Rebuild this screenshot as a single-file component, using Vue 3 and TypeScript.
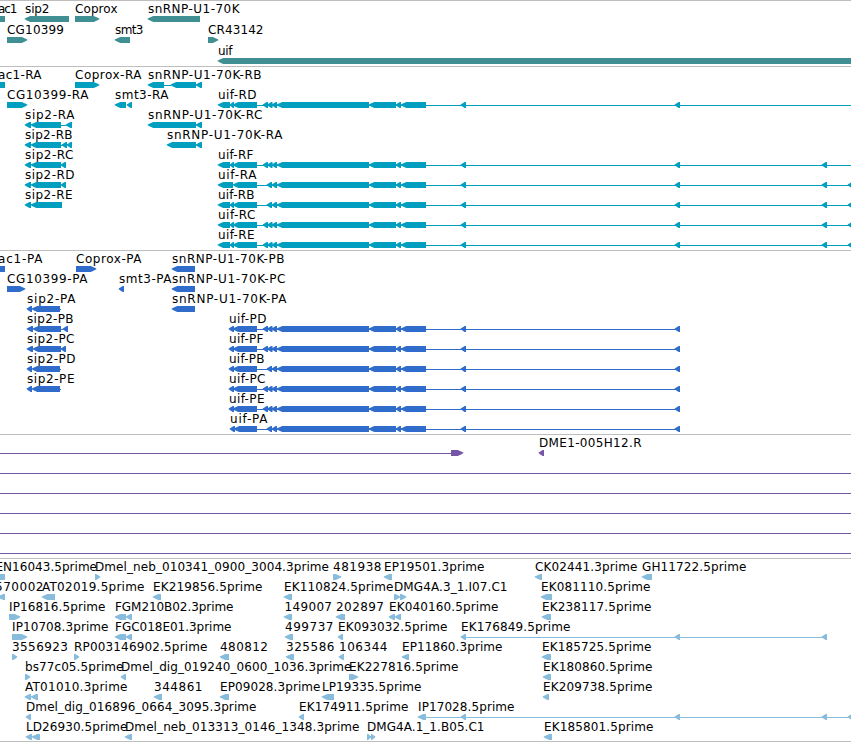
<script setup lang="ts">
type Span = [number, number]
type Direction = 'left' | 'right' | 'none'

interface Feature {
  row: number
  label?: string
  text?: Span
  dir: Direction
  spans: Span[]
  line?: Span
}

interface Track {
  name: string
  color: string
  height: number
  pitch: number
  features: Feature[]
}

const WIDTH = 851
const BAR_TOP = 16
const BASELINE = 13

function f(row: number, label: string, start: number, end: number, dir: Direction, spans: Span[], line?: Span): Feature {
  return { row, label, text: [start, end], dir, spans, line }
}

const uifCore: Span[] = [[277, 369], [369, 396], [396, 401], [401, 426], [461, 466], [675, 680]]
const triple: Span[] = [[263, 268], [267.5, 272.5], [272, 277]]
const pair: Span[] = [[267, 272], [272, 277]]
const rnaStart: Span[] = [[218, 230], [230, 234], [233, 257]]
const proteinStart: Span[] = [[229, 234], [233, 257]]
const sipStart: Span[] = [[25, 31], [31, 61]]
const sipProtein: Span[] = [[27, 32], [32, 60]]

const tracks: Track[] = [
  {
    name: 'genes', color: '#408f93', height: 66, pitch: 21,
    features: [
      f(0, 'ac1', -2, 17, 'none', [[0, 5]]),
      f(0, 'sip2', 25, 49, 'left', [[25, 69]]),
      f(0, 'Coprox', 75, 117, 'right', [[75, 99]]),
      f(0, 'snRNP-U1-70K', 148, 239, 'left', [[148, 200]]),
      f(1, 'CG10399', 7, 63.5, 'right', [[7, 27]]),
      f(1, 'smt3', 115, 143, 'left', [[115, 130]]),
      f(1, 'CR43142', 208, 263, 'right', [[208, 218]]),
      f(2, 'uif', 218, 232, 'left', [[218, 856]]),
    ],
  },
  {
    name: 'transcripts', color: '#009fc0', height: 184, pitch: 20,
    features: [
      f(0, 'ac1-RA', -2, 41, 'none', [[0, 5]]),
      f(0, 'Coprox-RA', 75, 141, 'right', [[75, 99]]),
      f(0, 'snRNP-U1-70K-RB', 148, 261, 'left', [[148, 164], [171, 196], [196, 202]], [164, 171]),
      f(1, 'CG10399-RA', 7, 88, 'right', [[7, 27]]),
      f(1, 'smt3-RA', 115, 168, 'left', [[115, 126], [127, 132]]),
      f(1, 'uif-RD', 218, 256, 'left', [...rnaStart, ...triple, ...uifCore], [257, 851]),
      f(2, 'sip2-RA', 25, 74, 'left', [...sipStart, [66, 72]], [61, 66]),
      f(2, 'snRNP-U1-70K-RC', 148, 262, 'left', [[148, 196], [196, 202]]),
      f(3, 'sip2-RB', 25, 72, 'left', [...sipStart, [62, 67], [67, 72]], [61, 67]),
      f(3, 'snRNP-U1-70K-RA', 167, 282, 'left', [[167, 196], [196, 202]]),
      f(4, 'sip2-RC', 25, 73, 'left', [...sipStart, [61, 66]]),
      f(4, 'uif-RF', 218, 253, 'left', [...rnaStart, ...triple, ...uifCore, [822, 827]], [257, 851]),
      f(5, 'sip2-RD', 25, 74, 'left', [...sipStart, [61, 66]]),
      f(5, 'uif-RA', 218, 256, 'left', [[218, 233], [233, 257], ...pair, ...uifCore, [822, 827], [848, 853]], [257, 851]),
      f(6, 'sip2-RE', 25, 72, 'left', [[25, 31], [31, 62]]),
      f(6, 'uif-RB', 218, 254, 'left', [...rnaStart, ...pair, ...uifCore, [822, 827], [848, 853]], [257, 851]),
      f(7, 'uif-RC', 218, 255, 'left', [...rnaStart, ...triple, ...uifCore, [822, 827], [848, 853]], [257, 851]),
      f(8, 'uif-RE', 218, 254, 'left', [...rnaStart, ...triple, ...uifCore, [822, 827], [848, 853]], [257, 851]),
    ],
  },
  {
    name: 'proteins', color: '#306ccc', height: 184, pitch: 20,
    features: [
      f(0, 'ac1-PA', -2, 42, 'none', [[0, 5]]),
      f(0, 'Coprox-PA', 76, 141, 'right', [[76, 96]]),
      f(0, 'snRNP-U1-70K-PB', 172, 284, 'left', [[172, 195]]),
      f(1, 'CG10399-PA', 7, 87, 'right', [[7, 25]]),
      f(1, 'smt3-PA', 119, 171, 'left', [[119, 124]]),
      f(1, 'snRNP-U1-70K-PC', 172, 285, 'left', [[172, 195]]),
      f(2, 'sip2-PA', 27, 75, 'left', sipProtein, [60, 61]),
      f(2, 'snRNP-U1-70K-PA', 172, 286, 'left', [[172, 195]]),
      f(3, 'sip2-PB', 27, 73, 'left', [[27, 33], [33, 61], [63, 68]], [61, 63]),
      f(3, 'uif-PD', 229, 266, 'left', [...proteinStart, ...triple, ...uifCore], [257, 680]),
      f(4, 'sip2-PC', 27, 74, 'left', [[27, 33], [33, 61], [61, 66]]),
      f(4, 'uif-PF', 229, 263, 'left', [...proteinStart, ...triple, ...uifCore], [257, 680]),
      f(5, 'sip2-PD', 27, 75, 'left', sipProtein, [60, 61]),
      f(5, 'uif-PB', 229, 264, 'left', [...proteinStart, ...pair, ...uifCore], [257, 680]),
      f(6, 'sip2-PE', 27, 74, 'left', sipProtein, [60, 61]),
      f(6, 'uif-PC', 229, 265, 'left', [...proteinStart, ...triple, ...uifCore], [257, 680]),
      f(7, 'uif-PE', 229, 264, 'left', [...proteinStart, ...triple, ...uifCore], [257, 680]),
      f(8, 'uif-PA', 230, 267, 'left', [[230, 235], [234, 257], ...pair, ...uifCore], [257, 680]),
    ],
  },
  {
    name: 'clones', color: '#7456a6', height: 124, pitch: 20,
    features: [
      { row: 0, dir: 'right', spans: [[451, 463]], line: [0, 451] },
      f(0, 'DME1-005H12.R', 539, 641, 'left', [[539, 544]]),
      ...[1, 2, 3, 4, 5].map((row): Feature => ({ row, dir: 'none', spans: [], line: [0, WIDTH] })),
    ],
  },
  {
    name: 'ests', color: '#88bcdc', height: 183, pitch: 20,
    features: [
      f(0, 'EN16043.5prime', -4.5, 96.5, 'none', [[0, 5]]),
      f(0, 'Dmel_neb_010341_0900_3004.3prime', 95, 328.5, 'right', [[95, 100]]),
      f(0, '481938', 333, 381, 'right', [[333, 341]]),
      f(0, 'EP19501.3prime', 384, 484, 'left', [[384, 392]]),
      f(0, 'CK02441.3prime', 535, 637, 'left', [[535, 542]]),
      f(0, 'GH11722.5prime', 642, 746, 'left', [[642, 652]]),
      f(1, '570002', -5, 43, 'left', [[-2, 5]]),
      f(1, 'AT02019.5prime', 42, 144, 'left', [[42, 55]]),
      f(1, 'EK219856.5prime', 153, 262, 'left', [[153, 161]]),
      f(1, 'EK110824.5prime', 284, 393, 'left', [[284, 292]]),
      f(1, 'DMG4A.3_1.I07.C1', 394, 507, 'right', [[394, 400], [400, 406]]),
      f(1, 'EK081110.5prime', 541, 650, 'left', [[541, 552]]),
      f(2, 'IP16816.5prime', 9, 105, 'right', [[9, 20]]),
      f(2, 'FGM210B02.3prime', 115, 233, 'left', [[115, 126], [126, 132]]),
      f(2, '149007', 284.5, 331.5, 'left', [[284, 292]]),
      f(2, '202897', 336, 383.5, 'left', [[336, 345]]),
      f(2, 'EK040160.5prime', 389, 498, 'left', [[389, 395], [395, 401]]),
      f(2, 'EK238117.5prime', 542, 651, 'left', [[542, 551]]),
      f(3, 'IP10708.3prime', 12, 108, 'right', [[12, 27]]),
      f(3, 'FGC018E01.3prime', 115, 231, 'left', [[115, 126], [126, 132]]),
      f(3, '499737', 285, 333, 'left', [[285, 293]]),
      f(3, 'EK093032.5prime', 338, 447, 'left', [[338, 343]]),
      f(3, 'EK176849.5prime', 461, 570, 'left', [[461, 466], [675, 680], [822, 827]], [461, 827]),
      f(4, '3556923', 12, 67.5, 'right', [[12, 17]]),
      f(4, 'RP003146902.5prime', 74, 207, 'right', [[74, 79]]),
      f(4, '480812', 220, 267.5, 'left', [[220, 229]]),
      f(4, '325586', 286, 334, 'left', [[286, 294]]),
      f(4, '106344', 339, 387, 'left', [[339, 344]]),
      f(4, 'EP11860.3prime', 402, 502, 'left', [[402, 409]]),
      f(4, 'EK185725.5prime', 542, 651, 'left', [[542, 551]]),
      f(5, 'bs77c05.5prime', 25, 123, 'right', [[25, 30]]),
      f(5, 'Dmel_dig_019240_0600_1036.3prime', 121, 351, 'left', [[121, 126]]),
      f(5, 'EK227816.5prime', 349, 458, 'right', [[349, 358]]),
      f(5, 'EK180860.5prime', 543, 652, 'left', [[543, 551]]),
      f(6, 'AT01010.3prime', 25, 127, 'left', [[25, 31], [31, 38]]),
      f(6, '344861', 154, 202, 'left', [[154, 162]]),
      f(6, 'EP09028.3prime', 220, 320, 'left', [[220, 229]]),
      f(6, 'LP19335.5prime', 322, 421, 'left', [[322, 334]]),
      f(6, 'EK209738.5prime', 543, 652, 'left', [[543, 549]]),
      f(7, 'Dmel_dig_016896_0664_3095.3prime', 26, 256, 'left', [[26, 31]]),
      f(7, 'EK174911.5prime', 299, 408, 'left', [[299, 304]]),
      f(7, 'IP17028.5prime', 418, 514, 'left', [[418, 426], [461, 466], [675, 680], [822, 827], [848, 853]], [418, 851]),
      f(8, 'LD26930.5prime', 26, 127, 'left', [[26, 32], [32, 40]]),
      f(8, 'Dmel_neb_013313_0146_1348.3prime', 125, 359, 'left', [[125, 132]]),
      f(8, 'DMG4A.1_1.B05.C1', 367, 484, 'right', [[367, 371], [371, 375]]),
      f(8, 'EK185801.5prime', 544, 653, 'left', [[544, 552]]),
    ],
  },
]

// Bars are six pixels tall and taper to a convex point.
function barPath([a, b]: Span, top: number, dir: Direction): string {
  const mid = top + 3
  const bottom = top + 6
  if (dir === 'none') return `M${a} ${top}H${b}V${bottom}H${a}Z`
  const head = Math.min(b - a, 7)
  const sign = dir === 'left' ? 1 : -1
  const tip = dir === 'left' ? a : b
  const tail = dir === 'left' ? b : a
  const shoulder = tip + sign * head * 0.75
  const cheek = tip + sign * head * 0.35
  return `M${tail} ${top}H${shoulder}L${cheek} ${top + 1.2}L${tip - sign * 0.3} ${mid - 0.4}V${mid + 0.3}L${cheek} ${bottom - 1.3}L${shoulder} ${bottom}H${tail}Z`
}

function featurePath(feature: Feature, pitch: number): string {
  const top = BAR_TOP + feature.row * pitch
  return feature.spans.map((span) => barPath(span, top, feature.dir)).join('')
}
</script>

<template>
  <main class="browser">
    <section v-for="track in tracks" :key="track.name" class="track">
      <svg class="canvas" :width="WIDTH" :height="track.height - 1" :viewBox="`0 1 ${WIDTH} ${track.height - 1}`">
        <g v-for="(feature, i) in track.features" :key="i" :fill="track.color">
          <rect
            v-if="feature.line"
            :x="feature.line[0]"
            :y="BAR_TOP + 3 + feature.row * track.pitch"
            :width="feature.line[1] - feature.line[0]"
            height="1"
          />
          <path :d="featurePath(feature, track.pitch)" />
          <text
            v-if="feature.text"
            class="label"
            :x="feature.text[0]"
            :y="BASELINE + feature.row * track.pitch"
            :textLength="feature.text[1] - feature.text[0] + 0.5"
          >{{ feature.label }}</text>
        </g>
      </svg>
    </section>
  </main>
</template>

<style>
body {
  background: #fff;
  overflow: hidden;
}
</style>

<style scoped>
.browser {
  display: flex;
  flex-direction: column;
  width: 851px;
  border-bottom: 1px solid #bebebe;
}

.track {
  border-top: 1px solid #bebebe;
}

.canvas {
  display: block;
}

.label {
  fill: #000;
  font-family: 'DejaVu Sans', sans-serif;
  font-size: 12px;
}
</style>
